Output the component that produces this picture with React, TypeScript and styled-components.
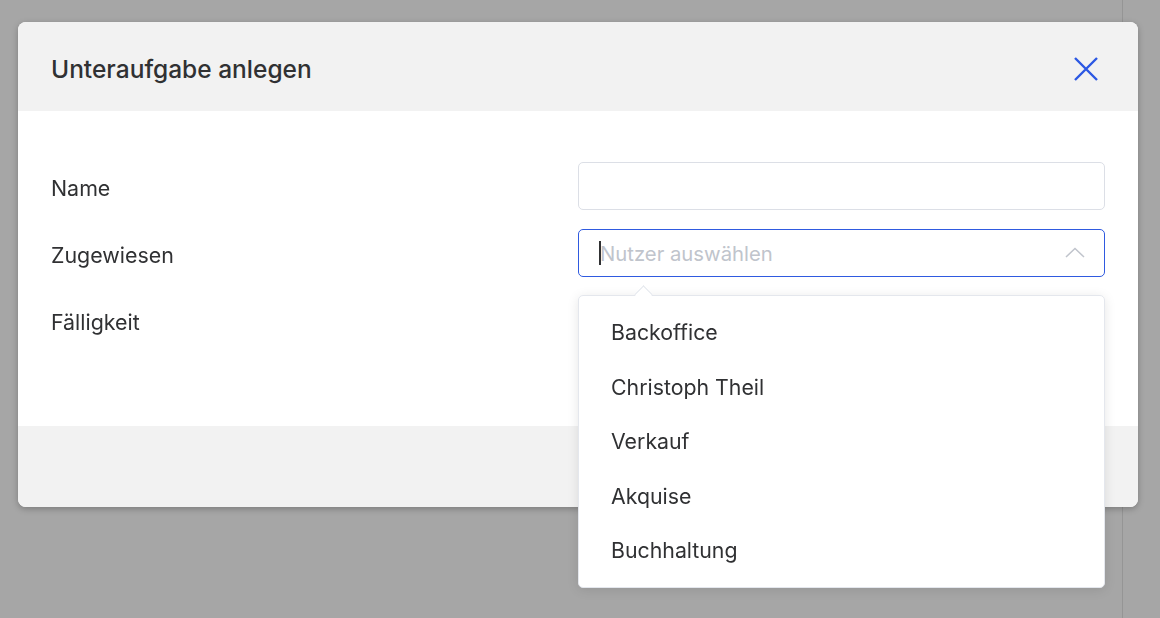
import React from 'react';
import styled, { createGlobalStyle } from 'styled-components';

const GlobalStyle = createGlobalStyle`
    html, body {
        margin: 0;
        padding: 0;
        height: 100%;
        overflow: hidden;
    }
    body {
        font-family: Inter, "Noto Sans", "Liberation Sans", sans-serif;
        background: #a6a6a6;
        color: #303133;
    }
`;

const Page = styled.div`
    display: flex;
    height: 618px;
`;
const PageMain = styled.div`
    width: 1122px;
    border-right: 1px solid #959595;
`;

const Overlay = styled.div`
    position: fixed;
    inset: 0;
    padding: 22px 0 0 18px;
`;
const Dialog = styled.div`
    width: 1120px;
    border-radius: 8px;
    background: #fff;
    box-shadow: 0 2px 6px rgba(0, 0, 0, 0.25);
`;
const Header = styled.div`
    display: flex;
    align-items: center;
    justify-content: space-between;
    box-sizing: border-box;
    height: 89px;
    padding: 4px 33px 0;
    background: #f2f2f2;
    border-radius: 8px 8px 0 0;
`;
const Title = styled.div`
    font-size: 24.5px;
    font-weight: 500;
    color: #303133;
`;
const Close = styled.button`
    display: flex;
    border: 0;
    padding: 0;
    margin-right: 6px;
    background: none;
    cursor: pointer;
`;
const Body = styled.div`
    display: grid;
    grid-template-columns: 1fr 1fr;
    row-gap: 19px;
    padding: 51px 33px 82px;
`;
const Label = styled.div`
    display: flex;
    align-items: center;
    box-sizing: border-box;
    height: 48px;
    padding-top: 4px;
    font-size: 21.4px;
    color: #303133;
`;
const Field = styled.div`
    position: relative;
`;
const Input = styled.div<{ $focused?: boolean }>`
    display: flex;
    align-items: center;
    box-sizing: border-box;
    height: 48px;
    padding: 0 19px 0 20px;
    border: 1px solid ${(p) => (p.$focused ? '#2f5ae0' : '#dcdfe6')};
    border-radius: 5px;
    background: #fff;
    font-size: 20.3px;
`;
const Caret = styled.span`
    width: 2px;
    height: 24px;
    background: #303133;
    margin-right: -1px;
`;
const Placeholder = styled.span`
    flex: 1;
    color: #c0c4cc;
`;
const Chevron = styled.svg`
    margin-top: -2px;
`;
const Dropdown = styled.div`
    position: absolute;
    left: 0;
    right: 0;
    top: 66px;
    z-index: 2;
    padding: 9px 0;
    border: 1px solid #e4e7ed;
    border-radius: 5px;
    background: #fff;
    box-shadow: 0 2px 12px rgba(0, 0, 0, 0.1);
`;
const Pointer = styled.div`
    position: absolute;
    top: -8px;
    left: 58px;
    width: 12px;
    height: 12px;
    background: #fff;
    border-top: 1px solid #e4e7ed;
    border-left: 1px solid #e4e7ed;
    transform: rotate(45deg);
`;
const Option = styled.div`
    display: flex;
    align-items: center;
    height: 54.5px;
    padding: 0 32px;
    font-size: 21.3px;
    color: #303133;
`;
const Footer = styled.div`
    height: 81px;
    background: #f2f2f2;
    border-radius: 0 0 8px 8px;
`;

const users = ['Backoffice', 'Christoph Theil', 'Verkauf', 'Akquise', 'Buchhaltung'];

export default function App() {
    return (
        <>
            <GlobalStyle />
            <Page>
                <PageMain />
            </Page>
            <Overlay>
                <Dialog>
                    <Header>
                        <Title>Unteraufgabe anlegen</Title>
                        <Close aria-label="Schließen">
                            <svg width="26" height="26" viewBox="0 0 26 26">
                                <path d="M2 2 L24 24 M24 2 L2 24" stroke="#2c58e3" strokeWidth="2.4" fill="none" />
                            </svg>
                        </Close>
                    </Header>
                    <Body>
                        <Label>Name</Label>
                        <Field>
                            <Input />
                        </Field>
                        <Label>Zugewiesen</Label>
                        <Field>
                            <Input $focused>
                                <Caret />
                                <Placeholder>Nutzer auswählen</Placeholder>
                                <Chevron width="20" height="11" viewBox="0 0 20 11">
                                    <path d="M1 10 L10 1.5 L19 10" stroke="#c0c4cc" strokeWidth="1.5" fill="none" />
                                </Chevron>
                            </Input>
                            <Dropdown>
                                <Pointer />
                                {users.map((u) => (
                                    <Option key={u}>{u}</Option>
                                ))}
                            </Dropdown>
                        </Field>
                        <Label>Fälligkeit</Label>
                        <Field>
                            <Input />
                        </Field>
                    </Body>
                    <Footer />
                </Dialog>
            </Overlay>
        </>
    );
}
